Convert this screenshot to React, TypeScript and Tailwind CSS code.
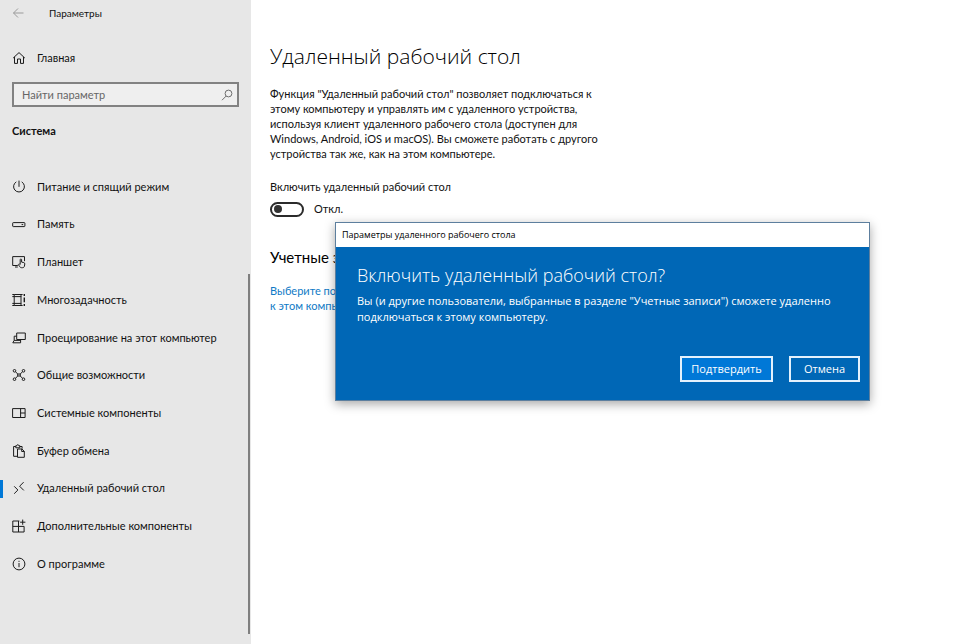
import React, { useState } from "react";

type IconProps = { children: React.ReactNode };

function Icon({ children }: IconProps) {
  return (
    <svg
      className="size-[14px] shrink-0"
      viewBox="0 0 14 14"
      fill="none"
      stroke="#1c1c1c"
      strokeWidth="1"
      aria-hidden="true"
    >
      {children}
    </svg>
  );
}

const items: { label: string; icon: React.ReactNode; active?: boolean }[] = [
  {
    label: "Питание и спящий режим",
    icon: <path d="M7 0.6v6.2M4.3 1.9a5.4 5.4 0 1 0 5.4 0" />,
  },
  {
    label: "Память",
    icon: (
      <>
        <rect x="0.7" y="4.6" width="12.2" height="4" rx="0.6" />
        <path d="M9.6 6.6h1.6" />
      </>
    ),
  },
  {
    label: "Планшет",
    icon: (
      <>
        <path d="M5.8 10.5H0.7V1.6h11.8v4.6M3 12h2.8" />
        <path
          d="M8.2 9.4V4.7c0-1 1.4-1 1.4 0v2.4l2.2.5c.8.2 1.1.7 1 1.4l-.4 2.2c-.2 1-.9 1.5-1.8 1.5H9.5c-.8 0-1.3-.4-1.7-1L6.3 9.6c.6-.7 1.3-.6 1.9-.2z"
          fill="#e7e7e7"
        />
      </>
    ),
  },
  {
    label: "Многозадачность",
    icon: (
      <>
        <rect x="2.2" y="3.6" width="6.8" height="6.8" />
        <path d="M0.3 1.5h1.9v2.1M10.6 1.5H9v2.1M2.2 1.5h6.8M0.3 12.5h1.9v-2.1M10.6 12.5H9v-2.1M2.2 12.5H9M0.3 3.6h1.9M0.3 10.4h1.9" />
        <path d="M12.3 1v2M12.3 4.6v4.6M12.3 11v2" strokeWidth="1.4" />
      </>
    ),
  },
  {
    label: "Проецирование на этот компьютер",
    icon: (
      <>
        <path d="M4.7 8.5V2h8.6v6.5H4.7z" />
        <path d="M4.7 5.2H2.2v4.2M2.2 9.4h6.3M8.6 8.5v3.3H0.8l1.4-2.4" />
      </>
    ),
  },
  {
    label: "Общие возможности",
    icon: (
      <>
        <circle cx="2.5" cy="2.8" r="1.3" />
        <circle cx="11.5" cy="2.8" r="1.3" />
        <circle cx="2.5" cy="11.2" r="1.3" />
        <circle cx="11.5" cy="11.2" r="1.3" />
        <path d="M3.5 3.7L5.7 6v2L3.5 10.3M10.5 3.7L8.3 6v2l2.2 2.3M5.7 6h2.6M5.7 8h2.6" />
      </>
    ),
  },
  {
    label: "Системные компоненты",
    icon: <path d="M0.6 2.6h12.5v8.9H0.6zM8.6 2.6v8.9M8.6 7h4.5" />,
  },
  {
    label: "Буфер обмена",
    icon: (
      <>
        <path d="M5 12.3H1.6V2.5h2.2M7.8 2.5h2.3v2.2M3.8 3.8V1.7h1c.2-1.4 1.8-1.4 2 0h1v2.1z" />
        <path d="M5.5 5h4.4l2.4 2.3v6H5.5zM9.7 5v2.5h2.6" />
      </>
    ),
  },
  {
    label: "Удаленный рабочий стол",
    active: true,
    icon: <path d="M2.2 4.3l3.7 3.7-3.7 3.7M11.8 0L7.6 4.2l4.2 4.2" />,
  },
  {
    label: "Дополнительные компоненты",
    icon: (
      <path d="M7.4 2H0.8v11h11.3V7.4H0.8M6.5 2v11M10.7 0.6v5.2M8.1 3.2h5.3" />
    ),
  },
  {
    label: "О программе",
    icon: (
      <>
        <circle cx="7" cy="7" r="5.9" />
        <path d="M7 6v4.2M7 3.8v1.1" />
      </>
    ),
  },
];

function Sidebar() {
  return (
    <aside className="relative w-[251px] shrink-0 bg-[#e7e7e7] pb-6">
      <header className="flex h-[26px] items-center gap-[25px] pl-3 text-[10px]">
        <button aria-label="Назад" className="flex">
          <svg className="h-[14px] w-3" viewBox="0 0 12 14" fill="none" stroke="#9b9b9b" aria-hidden="true">
            <path d="M11.5 7H1.5M6 2.5L1.5 7 6 11.5" />
          </svg>
        </button>
        <span>Параметры</span>
      </header>
      <a href="#home" className="mt-[22px] flex h-5 items-center gap-[11px] pl-3">
        <Icon>
          <path d="M1.2 7L7 1.6 12.8 7M2.5 6v6.4h3V8h3v4.4h3V6" />
        </Icon>
        Главная
      </a>
      <div className="mx-3 mt-[14px] flex h-[25px] items-center border-2 border-[#828282] bg-[#efefef] pr-1 pl-2">
        <input
          type="search"
          aria-label="Найти параметр"
          placeholder="Найти параметр"
          className="h-full min-w-0 flex-1 bg-transparent outline-none placeholder:text-[#666666]"
        />
        <svg className="size-3" viewBox="0 0 12 12" fill="none" stroke="#6f6f6f" aria-hidden="true">
          <circle cx="7.5" cy="4.5" r="3.4" />
          <path d="M5.2 7L1 11.2" />
        </svg>
      </div>
      <h2 className="mt-4 ml-3 leading-4 font-bold">Система</h2>
      <nav aria-label="Система" className="mt-[29px] grid h-[415px] auto-rows-fr">
        {items.map((item) => (
          <a
            key={item.label}
            href="#settings"
            aria-current={item.active ? "page" : undefined}
            className="flex items-center"
          >
            <span className={item.active ? "h-[18px] w-[3px] bg-[#0078d7]" : "w-[3px]"} />
            <span className="flex items-center gap-[11px] pl-[9px]">
              <Icon>{item.icon}</Icon>
              {item.label}
            </span>
          </a>
        ))}
      </nav>
      <div className="absolute top-[274px] right-px bottom-[10px] w-[2px] bg-[#7f7f7f]" />
    </aside>
  );
}

function Dialog() {
  return (
    <div
      role="dialog"
      aria-labelledby="dialog-title"
      className="absolute top-[222px] left-[335px] w-[535px] border border-[#5d7f9e] bg-[#0067b6] font-['Open_Sans','Noto_Sans',sans-serif] text-white shadow-[0_3px_10px_rgba(0,0,0,0.35)]"
    >
      <div className="flex h-6 items-center bg-white pl-[6px] text-[9px] text-black">
        Параметры удаленного рабочего стола
      </div>
      <div className="pt-4 pr-[9px] pb-[18px] pl-[21px]">
        <h2 id="dialog-title" className="text-[18px] leading-6 font-light">
          Включить удаленный рабочий стол?
        </h2>
        <p className="mt-[6px] leading-4">
          Вы (и другие пользователи, выбранные в разделе "Учетные записи") сможете удаленно подключаться к этому компьютеру.
        </p>
        <div className="mt-[31px] flex justify-end gap-4">
          <button className="h-[26px] w-[93px] border-2 border-[#e4f1fc] bg-[#0078d7]">Подтвердить</button>
          <button className="h-[26px] w-[71px] border-2 border-[#e4f1fc]">Отмена</button>
        </div>
      </div>
    </div>
  );
}

export default function App() {
  const [enabled, setEnabled] = useState(false);
  return (
    <div className="relative flex min-h-screen bg-white font-['Lato','Noto_Sans',sans-serif] text-[11px] text-[#111111]">
      <Sidebar />
      <main className="flex-1 pt-10 pl-[19px]">
        <h1 className="font-['Open_Sans','Noto_Sans',sans-serif] text-[21px] leading-8 font-light text-black">
          Удаленный рабочий стол
        </h1>
        <p className="mt-[14px] max-w-[334px] leading-[15px]">
          Функция "Удаленный рабочий стол" позволяет подключаться к этому компьютеру и управлять им с
          удаленного устройства, используя клиент удаленного рабочего стола (доступен для Windows, Android,
          iOS и macOS). Вы сможете работать с другого устройства так же, как на этом компьютере.
        </p>
        <label htmlFor="remote" className="mt-4 block leading-5">
          Включить удаленный рабочий стол
        </label>
        <div className="mt-1 flex h-4 items-center gap-[10px]">
          <input
            id="remote"
            type="checkbox"
            role="switch"
            checked={enabled}
            onChange={(e) => setEnabled(e.target.checked)}
            className="flex h-[15px] w-[34px] appearance-none items-center rounded-full border-2 border-[#2b2b2b] px-[2px] before:size-2 before:rounded-full before:bg-[#333333] checked:justify-end"
          />
          <span>{enabled ? "Вкл." : "Откл."}</span>
        </div>
        <h2 className="mt-7 text-[15px] leading-6 text-black">Учетные записи</h2>
        <a href="#users" className="mt-[14px] block max-w-[300px] leading-[15px] text-[#0f7ac6]">
          Выберите пользователей, которые могут подключаться
          <br />к этом компьютеру
        </a>
      </main>
      <Dialog />
    </div>
  );
}
